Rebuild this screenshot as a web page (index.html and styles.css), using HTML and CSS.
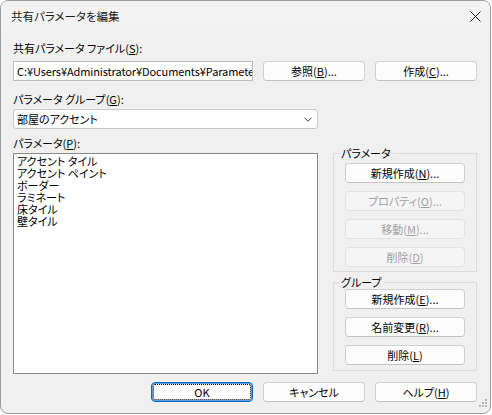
FILE: index.html
```html
<!DOCTYPE html>
<html lang="ja">
<head>
<meta charset="utf-8">
<title>共有パラメータを編集</title>
<link rel="stylesheet" href="styles.css">
</head>
<body>
<div class="window">
  <div class="titlebar">
    <span class="title">共有パラメータを編集</span>
    <svg class="close" width="11" height="11" viewBox="0 0 11 11" aria-label="閉じる"><path d="M0.5 0.5 L10.5 10.5 M10.5 0.5 L0.5 10.5" stroke="#1b1b1b" stroke-width="1" fill="none"/></svg>
  </div>
  <div class="content">
    <div class="label l1">共有パラメータ ファイル(<u>S</u>):</div>
    <div class="row1">
      <div class="field">C:¥Users¥Administrator¥Documents¥Parameters.txt</div>
      <button class="btn">参照(<u>B</u>)...</button>
      <button class="btn">作成(<u>C</u>)...</button>
    </div>
    <div class="label l2">パラメータ グループ(<u>G</u>):</div>
    <div class="combo">
      <span>部屋のアクセント</span>
      <svg class="chev" width="8" height="5" viewBox="0 0 8 5"><path d="M0.5 0.8 L4 4.2 L7.5 0.8" stroke="#444" stroke-width="1" fill="none"/></svg>
    </div>
    <div class="label l3">パラメータ(<u>P</u>):</div>
    <div class="main">
      <div class="list">
        <div class="item">アクセント タイル</div>
        <div class="item">アクセント ペイント</div>
        <div class="item">ボーダー</div>
        <div class="item">ラミネート</div>
        <div class="item">床タイル</div>
        <div class="item">壁タイル</div>
      </div>
      <div class="side">
        <fieldset class="group g1">
          <legend>パラメータ</legend>
          <div class="gbtns">
            <button class="btn wide">新規作成(<u>N</u>)...</button>
            <button class="btn wide" disabled>プロパティ(<u>O</u>)...</button>
            <button class="btn wide" disabled>移動(<u>M</u>)...</button>
            <button class="btn wide" disabled>削除(<u>D</u>)</button>
          </div>
        </fieldset>
        <fieldset class="group g2">
          <legend>グループ</legend>
          <div class="gbtns">
            <button class="btn wide">新規作成(<u>E</u>)...</button>
            <button class="btn wide">名前変更(<u>R</u>)...</button>
            <button class="btn wide">削除(<u>L</u>)</button>
          </div>
        </fieldset>
      </div>
    </div>
    <div class="footer">
      <button class="btn ok">OK</button>
      <button class="btn">キャンセル</button>
      <button class="btn">ヘルプ(<u>H</u>)</button>
    </div>
  </div>
  <svg class="grip" width="9" height="9" viewBox="0 0 9 9">
    <g fill="#b8b8b8">
      <rect x="6" y="0" width="2" height="2"/>
      <rect x="3" y="3" width="2" height="2"/>
      <rect x="6" y="3" width="2" height="2"/>
      <rect x="0" y="6" width="2" height="2"/>
      <rect x="3" y="6" width="2" height="2"/>
      <rect x="6" y="6" width="2" height="2"/>
    </g>
  </svg>
</div>
</body>
</html>
```

FILE: styles.css
```css
html, body {
  margin: 0;
  background: #ffffff;
}

.window {
  position: relative;
  width: 491px;
  height: 414px;
  box-sizing: border-box;
  border: 1px solid #9d9d9d;
  border-radius: 8px;
  background: #f0f0f0;
  overflow: hidden;
  display: flex;
  flex-direction: column;
  font-family: "Noto Sans CJK JP", "Liberation Sans", sans-serif;
  font-size: 11px;
  line-height: 14px;
  font-feature-settings: "palt" 1;
  color: #000;
}

.titlebar {
  height: 30px;
  flex: none;
  background: #f3f3f3;
  display: flex;
  align-items: center;
  justify-content: space-between;
  padding: 0 9px 0 10px;
}

.title {
  color: #1b1b1b;
  font-size: 11.5px;
}

.close {
  display: block;
}

.content {
  display: flex;
  flex-direction: column;
  padding: 0 13px 0 12px;
}

.label {
  height: 14px;
  white-space: nowrap;
}

.l1 { margin-top: 10px; }
.l2 { margin-top: 11px; }
.l3 { margin-top: 7px; }

.row1 {
  margin-top: 6px;
  display: flex;
  gap: 10px;
}

.field {
  width: 240px;
  height: 20px;
  box-sizing: border-box;
  border: 1px solid #bcbcbc;
  background: #fff;
  padding: 0 0 0 3px;
  line-height: 18px;
  white-space: nowrap;
  overflow: hidden;
  letter-spacing: -0.1px;
}

.btn {
  width: 102px;
  height: 20px;
  box-sizing: border-box;
  border: 1px solid #d0d0d0;
  border-bottom-color: #c2c2c2;
  border-radius: 4px;
  background: #fdfdfd;
  padding: 0;
  margin: 0;
  font: inherit;
  font-feature-settings: "palt" 1;
  line-height: 17px;
  color: #000;
  white-space: nowrap;
}

.btn:disabled {
  background: #f5f5f5;
  border-color: #e3e3e3;
  color: #a0a0a0;
}

.btn.wide {
  width: 120px;
}

.btn.ok {
  border-color: #0067c0;
  box-shadow: inset 0 0 0 1px #5c9fdc;
  outline: 1px dotted #000;
  outline-offset: -3px;
}

.combo {
  margin-top: 3px;
  width: 305px;
  height: 20px;
  box-sizing: border-box;
  border: 1px solid #c8c8c8;
  border-radius: 3px;
  background: #fff;
  display: flex;
  align-items: center;
  justify-content: space-between;
  padding: 0 5px 0 3px;
}

.chev {
  display: block;
}

.main {
  margin-top: 3px;
  display: flex;
  gap: 15px;
}

.list {
  width: 305px;
  height: 221px;
  box-sizing: border-box;
  border: 1px solid #8a8a8a;
  background: #fff;
  padding: 1px 3px;
  line-height: 12px;
}

.item {
  height: 12px;
  white-space: nowrap;
}

.side {
  width: 144px;
  margin-top: -7px;
  display: flex;
  flex-direction: column;
}

.group {
  margin: 0;
  padding: 0;
  min-width: 0;
  border: 1px solid #dcdcdc;
}

.group legend {
  margin-left: 5px;
  padding: 0 2px;
  line-height: 14px;
}

.gbtns {
  display: flex;
  flex-direction: column;
  gap: 8px;
  padding: 0 11px;
}

.g1 .gbtns { padding-top: 3px; padding-bottom: 4px; }
.g2 { margin-top: 3px; }
.g2 .gbtns { padding-top: 0; padding-bottom: 5px; }

.footer {
  margin-top: 8px;
  display: flex;
  justify-content: flex-end;
  gap: 10px;
}

.grip {
  position: absolute;
  right: 2px;
  bottom: 5px;
}
```
